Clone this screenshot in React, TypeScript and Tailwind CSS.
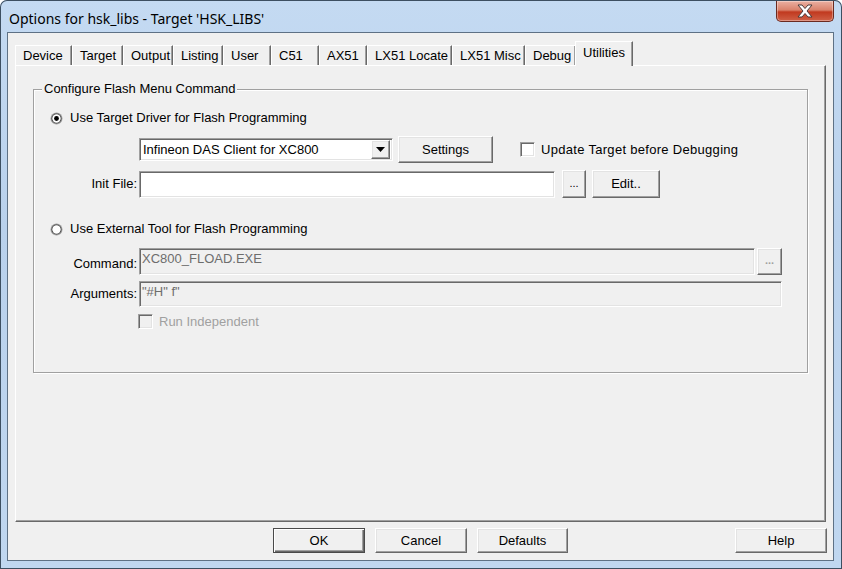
import React from 'react';

const raised =
  'border border-t-white border-l-white border-r-[#696969] border-b-[#696969] shadow-[inset_-1px_-1px_0_#a0a0a0,inset_1px_1px_0_#e3e3e3]';
const sunken =
  'border border-t-[#a0a0a0] border-l-[#a0a0a0] border-r-white border-b-white shadow-[inset_1px_1px_0_#696969,inset_-1px_-1px_0_#e3e3e3]';

const Radio: React.FC<{ checked?: boolean }> = ({ checked }) => (
  <svg width="13" height="13" viewBox="0 0 13 13" className="shrink-0">
    <circle cx="6.5" cy="6.5" r="6" fill="#a0a0a0" />
    <circle cx="6.5" cy="6.5" r="5" fill="#404040" />
    <circle cx="6.5" cy="6.5" r="4.2" fill="#ffffff" />
    {checked && <circle cx="6.5" cy="6.5" r="2.4" fill="#000000" />}
  </svg>
);

const Check: React.FC<{ disabled?: boolean }> = ({ disabled }) => (
  <div className={`w-[15px] h-[15px] shrink-0 ${sunken} ${disabled ? 'bg-[#f0f0f0]' : 'bg-white'}`} />
);

const Button: React.FC<{ label: string; className?: string; dim?: boolean; def?: boolean }> = ({
  label,
  className = '',
  dim,
  def,
}) => (
  <div
    className={`flex items-center justify-center bg-[#f0f0f0] ${
      def
        ? 'border border-[#4a4a4a] shadow-[inset_1px_1px_0_white,inset_-1px_-1px_0_#696969,inset_-2px_-2px_0_#a0a0a0]'
        : raised
    } ${dim ? 'text-[#a0a0a0]' : 'text-black'} ${className}`}
  >
    {label}
  </div>
);

const tabs: { name: string; w: string }[] = [
  { name: 'Device', w: 'w-[57px]' },
  { name: 'Target', w: 'w-[51px]' },
  { name: 'Output', w: 'w-[50px]' },
  { name: 'Listing', w: 'w-[50px]' },
  { name: 'User', w: 'w-[48px]' },
  { name: 'C51', w: 'w-[48px]' },
  { name: 'AX51', w: 'w-[48px]' },
  { name: 'LX51 Locate', w: 'w-[85px]' },
  { name: 'LX51 Misc', w: 'w-[73px]' },
  { name: 'Debug', w: 'w-[51px]' },
];

export default function App() {
  return (
    <div
      className="w-[842px] h-[569px] flex flex-col overflow-hidden rounded-t-[7px] bg-[linear-gradient(180deg,#c4daf2_0%,#b9d1ec_40%,#c0d7f0_100%)] shadow-[inset_0_0_0_1px_#3d4f61] text-[13px] text-black"
      style={{ fontFamily: '"Liberation Sans", Arial, sans-serif' }}
    >
      {/* title bar */}
      <div className="h-[32px] flex items-start shrink-0">
        <div
          className="pl-[9px] pt-[9px] text-[14px] leading-[20px] text-black"
          style={{ fontFamily: '"Noto Sans", "Open Sans", sans-serif' }}
        >
          Options for hsk_libs - Target 'HSK_LIBS'
        </div>
        <div className="ml-auto mr-[8px] mt-[1px] w-[58px] h-[21px] rounded-b-[5px] border border-t-0 border-[#6b2a20] bg-[linear-gradient(180deg,#eab0a2_0%,#d9826c_45%,#c1391f_55%,#cf6147_100%)] shadow-[inset_0_0_0_1px_rgba(255,255,255,0.35)] flex items-center justify-center">
          <svg width="18" height="14" viewBox="0 0 18 14">
            <path
              d="M2 1 L6 1 L9 4.5 L12 1 L16 1 L11 7 L16 13 L12 13 L9 9.5 L6 13 L2 13 L7 7 Z"
              fill="#ffffff"
              stroke="#4a3a3a"
              strokeWidth="1"
              strokeLinejoin="round"
            />
          </svg>
        </div>
      </div>

      {/* client area */}
      <div className="ml-[7px] mr-[8px] h-[529px] border border-[#5e7185] bg-[#f0f0f0] flex flex-col shrink-0">
        {/* tabs */}
        <div className="pl-[7px] pt-[8px] h-[32px] flex items-end relative z-10">
          {tabs.map((t) => (
            <div
              key={t.name}
              className={`${t.w} h-[20px] pl-[7px] leading-[19px] whitespace-nowrap border-t border-l border-r border-t-white border-l-white border-r-[#696969] shadow-[inset_-1px_0_0_#a0a0a0]`}
            >
              {t.name}
            </div>
          ))}
          <div className="w-[58px] h-[25px] -ml-[1px] -mb-[1px] pl-[7px] leading-[22px] whitespace-nowrap bg-[#f0f0f0] border-t border-l border-r border-t-white border-l-white border-r-[#696969] shadow-[inset_-1px_0_0_#a0a0a0]">
            Utilities
          </div>
        </div>

        {/* tab panel */}
        <div className="mx-[7px] h-[457px] border border-t-white border-l-white border-r-[#696969] border-b-[#696969] shadow-[inset_-1px_-1px_0_#a0a0a0] flex flex-col">
          {/* group box */}
          <div className="relative mx-[17px] mt-[23px] h-[284px] border border-[#a0a0a0] shadow-[1px_1px_0_white,inset_1px_1px_0_white] flex flex-col">
            <span className="absolute -top-[9px] left-[8px] px-[2px] bg-[#f0f0f0] leading-[16px]">
              Configure Flash Menu Command
            </span>

            <div className="mt-[20px] h-[16px] pl-[16px] flex items-center gap-[7px]">
              <Radio checked />
              <span>Use Target Driver for Flash Programming</span>
            </div>

            <div className="mt-[10px] h-[27px] pl-[105px] flex items-center">
              <div className={`w-[254px] h-[23px] bg-white ${sunken} flex items-center pl-[3px] pr-[2px]`}>
                <span className="flex-1">Infineon DAS Client for XC800</span>
                <div className={`w-[19px] h-[19px] bg-[#f0f0f0] ${raised} flex items-center justify-center`}>
                  <svg width="9" height="5" viewBox="0 0 9 5">
                    <path d="M0 0 L9 0 L4.5 5 Z" fill="#000" />
                  </svg>
                </div>
              </div>
              <Button label="Settings" className="ml-[5px] w-[95px] h-[27px]" />
              <div className="ml-[27px] flex items-center gap-[6px]">
                <Check />
                <span className="tracking-[0.3px]">Update Target before Debugging</span>
              </div>
            </div>

            <div className="mt-[7px] h-[28px] flex items-center">
              <span className="w-[103px] text-right">Init File:</span>
              <div className={`ml-[2px] w-[416px] h-[27px] bg-white ${sunken}`} />
              <Button label="..." className="ml-[7px] w-[24px] h-[28px] text-[11px] pb-[2px]" />
              <Button label="Edit.." className="ml-[6px] w-[68px] h-[28px]" />
            </div>

            <div className="mt-[23px] h-[16px] pl-[16px] flex items-center gap-[7px]">
              <Radio />
              <span>Use External Tool for Flash Programming</span>
            </div>

            <div className="mt-[11px] h-[27px] flex items-center">
              <span className="w-[103px] text-right pt-[5px]">Command:</span>
              <div className={`ml-[2px] w-[616px] h-[27px] bg-[#f0f0f0] ${sunken} pl-[2px] pt-[2px] leading-[16px] text-[#6d6d6d]`}>
                XC800_FLOAD.EXE
              </div>
              <Button label="..." dim className="ml-[2px] w-[25px] h-[27px] text-[11px] font-bold pb-[2px]" />
            </div>

            <div className="mt-[6px] h-[26px] flex items-center">
              <span className="w-[103px] text-right pb-[1px]">Arguments:</span>
              <div className={`ml-[2px] w-[643px] h-[26px] bg-[#f0f0f0] ${sunken} pl-[2px] pt-[2px] leading-[16px] text-[#6d6d6d]`}>
                "#H" f"
              </div>
            </div>

            <div className="mt-[7px] h-[15px] pl-[104px] flex items-center gap-[6px]">
              <Check disabled />
              <span className="text-[#a0a0a0]">Run Independent</span>
            </div>
          </div>
        </div>

        {/* bottom buttons */}
        <div className="mt-[6px] h-[25px] flex pl-[265px] pr-[6px]">
          <Button label="OK" def className="w-[92px] h-[25px]" />
          <Button label="Cancel" className="ml-[10px] w-[92px] h-[25px]" />
          <Button label="Defaults" className="ml-[10px] w-[91px] h-[25px]" />
          <div className="flex-1" />
          <Button label="Help" className="w-[92px] h-[25px]" />
        </div>
      </div>
    </div>
  );
}
